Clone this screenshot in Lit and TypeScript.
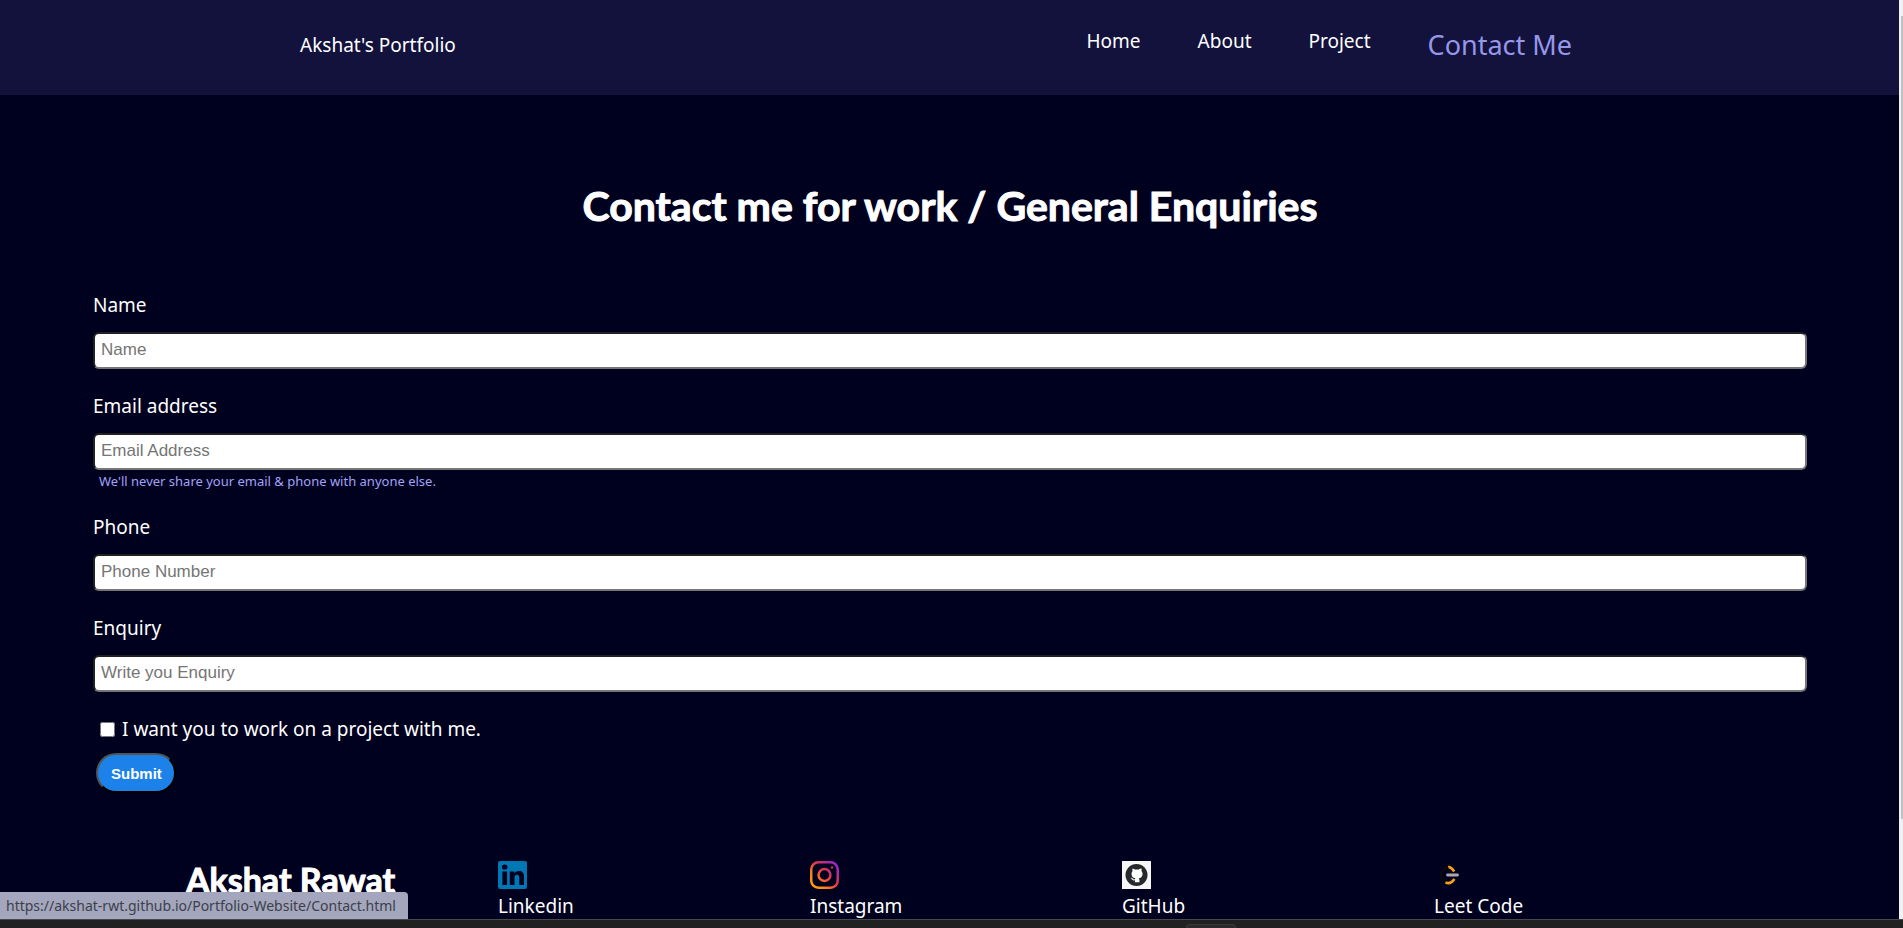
import { LitElement, html, css, svg } from "lit";
import { customElement, state } from "lit/decorators.js";

interface Field {
  id: string;
  label: string;
  type: string;
  placeholder: string;
  hint?: string;
}

const FIELDS: Field[] = [
  { id: "name", label: "Name", type: "text", placeholder: "Name" },
  {
    id: "email",
    label: "Email address",
    type: "email",
    placeholder: "Email Address",
    hint: "We'll never share your email & phone with anyone else.",
  },
  { id: "phone", label: "Phone", type: "tel", placeholder: "Phone Number" },
  { id: "enquiry", label: "Enquiry", type: "text", placeholder: "Write you Enquiry" },
];

const linkedin = svg`
  <svg class="icon" viewBox="0 0 29 28" aria-hidden="true">
    <rect width="29" height="28" rx="2" fill="#0077b5"/>
    <g fill="#00001f">
      <ellipse cx="6.700" cy="6" rx="2.800" ry="2.600"/>
      <path d="M4.400 10.500h4.700V24H4.400z"/>
      <path d="M11.800 10.500h4.500v2c.9-1.500 2.300-2.400 4.500-2.400 3.800 0 5.200 2 5.200 5.900V24h-4.700v-7.200c0-1.900-.6-3-2.200-3-1.700 0-2.600 1.100-2.600 3V24h-4.700z"/>
    </g>
  </svg>`;

const instagram = svg`
  <svg class="icon" viewBox="0 0 29 28" aria-hidden="true">
    <defs>
      <linearGradient id="ig" x1="0" y1="1" x2="1" y2="0">
        <stop offset="0" stop-color="#ffb400"/>
        <stop offset="0.3" stop-color="#fb7c1c"/>
        <stop offset="0.55" stop-color="#e6374a"/>
        <stop offset="0.8" stop-color="#a72aa5"/>
        <stop offset="1" stop-color="#8a2be0"/>
      </linearGradient>
    </defs>
    <path fill="url(#ig)" fill-rule="evenodd" d="M8.500 0h12A8.500 8.500 0 0 1 29 8.500v11a8.500 8.500 0 0 1-8.500 8.500h-12A8.500 8.500 0 0 1 0 19.500v-11A8.500 8.500 0 0 1 8.500 0zM8.500 2.500a6 6 0 0 0-6 6v11a6 6 0 0 0 6 6h12a6 6 0 0 0 6-6v-11a6 6 0 0 0-6-6zM14.500 6.800a7.200 7.200 0 1 1 0 14.400a7.200 7.200 0 0 1 0-14.400zM14.500 9.300a4.700 4.700 0 1 0 0 9.400a4.700 4.700 0 0 0 0-9.400z"/>
    <circle cx="22" cy="6.500" r="1.200" fill="#e02b4f"/>
  </svg>`;

const github = svg`
  <svg class="icon" viewBox="0 0 29 28" aria-hidden="true">
    <rect width="29" height="28" fill="#f7f7f7"/>
    <circle cx="14.500" cy="14" r="11" fill="#25292b"/>
    <path fill="#fff" d="M10.200 7.600c1 0 1.900.5 2.600 1 1.300-.3 2.700-.3 4 0 .7-.5 1.600-1 2.600-1 .4 1 .3 1.900.1 2.400 1.300 1.500 1.300 3.600.5 5.300-.6 1.200-1.800 1.800-3.300 2.100.6.700.8 1.300.8 2.100v1.800h-4.600v-2c-2 .5-2.700-.4-3.200-1.300-.3-.5-.6-.8-1-1.100.9-.4 1.600.1 2.100.8.500.8 1.200.9 2.100.6.100-.4.300-.7.600-.9-1.500-.3-2.800-.9-3.400-2.100-.8-1.700-.8-3.800.5-5.300-.3-.6-.4-1.400 0-2.400z"/>
  </svg>`;

const leetcode = svg`
  <svg class="icon" viewBox="0 0 29 28" fill="none" stroke-linecap="round" aria-hidden="true">
    <path stroke="#0a0a0c" stroke-width="2.600" d="M16 3L7.500 11.500Q5.500 14 7.500 16.500L11.500 21"/>
    <path stroke="#f89f1b" stroke-width="2.600" stroke-linecap="butt" d="M14.300 6.200C16.500 5.600 18.500 8 20.300 10.500"/>
    <path stroke="#f89f1b" stroke-width="2.600" stroke-linecap="butt" d="M11.500 21.300C15 23.400 17.500 22.300 20.500 18"/>
    <path stroke="#a9a9b0" stroke-width="2.800" d="M13.500 14h10"/>
  </svg>`;

const SOCIAL = [
  { label: "Linkedin", icon: linkedin },
  { label: "Instagram", icon: instagram },
  { label: "GitHub", icon: github },
  { label: "Leet Code", icon: leetcode },
];

@customElement("site-nav")
export class SiteNav extends LitElement {
  static styles = css`
    :host {
      display: block;
      background: #12123d;
    }
    .bar {
      display: flex;
      justify-content: space-between;
      height: 95px;
      box-sizing: border-box;
      padding: 26px 327px 0 300px;
    }
    .brand {
      padding-top: 6px;
      line-height: 26px;
    }
    .links {
      display: flex;
      gap: 57px;
      margin: 0;
      padding: 0;
      list-style: none;
    }
    .link {
      display: block;
      color: #fff;
      text-decoration: none;
      line-height: 30px;
    }
    .link.active {
      color: #9797e8;
      font-size: 27px;
      line-height: 38px;
    }
  `;

  render() {
    return html`
      <nav class="bar">
        <div class="brand">Akshat's Portfolio</div>
        <ul class="links">
          <li><a class="link" href="#home">Home</a></li>
          <li><a class="link" href="#about">About</a></li>
          <li><a class="link" href="#project">Project</a></li>
          <li><a class="link active" href="#contact">Contact Me</a></li>
        </ul>
      </nav>
    `;
  }
}

@customElement("contact-form")
export class ContactForm extends LitElement {
  @state() private wantsProject = false;

  static styles = css`
    :host {
      display: block;
      padding: 0 92px 0 93px;
    }
    .title {
      margin: 0;
      padding: 83px 0 59px;
      text-align: center;
      font-family: Lato, sans-serif;
      font-size: 41px;
      line-height: 56px;
      font-weight: 700;
      -webkit-text-stroke: 1px #fff;
    }
    .field {
      display: flex;
      flex-direction: column;
      margin-bottom: 25px;
    }
    .label {
      line-height: 24px;
      margin-bottom: 15px;
    }
    .input {
      box-sizing: border-box;
      width: 100%;
      height: 37px;
      padding: 2px 6px 4px;
      border: 2px inset #767676;
      border-radius: 6px;
      background: #fff;
      color: #111;
      font-family: "Liberation Sans", Arial, sans-serif;
      font-size: 17px;
    }
    .input::placeholder {
      color: #757575;
    }
    .hint {
      box-sizing: border-box;
      height: 20px;
      padding: 1px 0 0 6px;
      color: #a3a3f5;
      font-size: 13px;
      line-height: 20px;
    }
    .check {
      display: flex;
      align-items: center;
      gap: 7px;
      padding-left: 7px;
      line-height: 24px;
    }
    .box {
      width: 15px;
      height: 15px;
      margin: 0;
    }
    .submit {
      display: block;
      height: 40px;
      margin: 12px 0 0 3px;
      padding: 1px 12px 0 13px;
      border: 2px outset #000;
      border-radius: 20px;
      background: #1c82ea;
      color: #fff;
      font-family: "Liberation Sans", Arial, sans-serif;
      font-size: 15px;
      font-weight: 700;
    }
  `;

  render() {
    return html`
      <h1 class="title">Contact me for work / General Enquiries</h1>
      <form @submit=${(e: Event) => e.preventDefault()}>
        ${FIELDS.map(
          (f) => html`
            <div class="field">
              <label class="label" for=${f.id}>${f.label}</label>
              <input class="input" id=${f.id} type=${f.type} placeholder=${f.placeholder} />
              ${f.hint ? html`<small class="hint">${f.hint}</small>` : null}
            </div>
          `
        )}
        <div class="check">
          <input
            class="box"
            id="project"
            type="checkbox"
            .checked=${this.wantsProject}
            @change=${(e: Event) => (this.wantsProject = (e.target as HTMLInputElement).checked)}
          />
          <label for="project">I want you to work on a project with me.</label>
        </div>
        <button class="submit" type="submit">Submit</button>
      </form>
    `;
  }
}

@customElement("site-footer")
export class SiteFooter extends LitElement {
  static styles = css`
    :host {
      display: block;
      padding: 68px 153px 0 186px;
    }
    .columns {
      display: grid;
      grid-template-columns: repeat(5, 1fr);
    }
    .owner {
      margin: 0;
      font-family: Lato, sans-serif;
      font-size: 34px;
      line-height: 38px;
      font-weight: 700;
      -webkit-text-stroke: 1px #fff;
    }
    .social {
      display: flex;
      flex-direction: column;
      align-items: flex-start;
      gap: 4px;
      color: #fff;
      text-decoration: none;
      line-height: 26px;
    }
    .icon {
      display: block;
      width: 29px;
      height: 28px;
    }
  `;

  render() {
    return html`
      <footer class="columns">
        <h2 class="owner">Akshat Rawat</h2>
        ${SOCIAL.map(
          (s) => html`<a class="social" href="#${s.label}">${s.icon}<span>${s.label}</span></a>`
        )}
      </footer>
    `;
  }
}

@customElement("app-root")
export class AppRoot extends LitElement {
  static styles = css`
    :host {
      display: flex;
      flex-direction: column;
      height: 100vh;
      overflow: hidden;
      background: #00001f;
      color: #fff;
      font-family: "Noto Sans", sans-serif;
      font-size: 19px;
    }
    .view {
      position: relative;
      display: flex;
      flex: 1;
      min-height: 0;
    }
    .page {
      flex: 1;
      min-width: 0;
      overflow: hidden;
    }
    .scroll {
      width: 4px;
      box-sizing: border-box;
      background: #f1f1f1;
      padding: 16px 0 100px 2px;
    }
    .thumb {
      height: 100%;
      background: #c1c1c1;
    }
    .status {
      position: absolute;
      left: 0;
      bottom: 0;
      box-sizing: border-box;
      height: 27px;
      padding: 0 12px 0 6px;
      border-top-right-radius: 4px;
      background: #a3a6bc;
      color: #3c404b;
      font-family: "Noto Sans", sans-serif;
      font-size: 14px;
      line-height: 27px;
    }
    .taskbar {
      display: flex;
      height: 9px;
      box-sizing: border-box;
      padding: 4px 0 0 1186px;
      border-top: 1px solid #48494c;
      background: #212121;
    }
    .tab {
      width: 50px;
      box-sizing: border-box;
      border: 1px solid #3a3a3a;
      border-bottom: 0;
      border-radius: 4px 4px 0 0;
      background: #2b2b2b;
    }
  `;

  render() {
    return html`
      <div class="view">
        <div class="page">
          <site-nav></site-nav>
          <contact-form></contact-form>
          <site-footer></site-footer>
        </div>
        <div class="scroll"><div class="thumb"></div></div>
        <div class="status">https://akshat-rwt.github.io/Portfolio-Website/Contact.html</div>
      </div>
      <div class="taskbar"><div class="tab"></div></div>
    `;
  }
}
